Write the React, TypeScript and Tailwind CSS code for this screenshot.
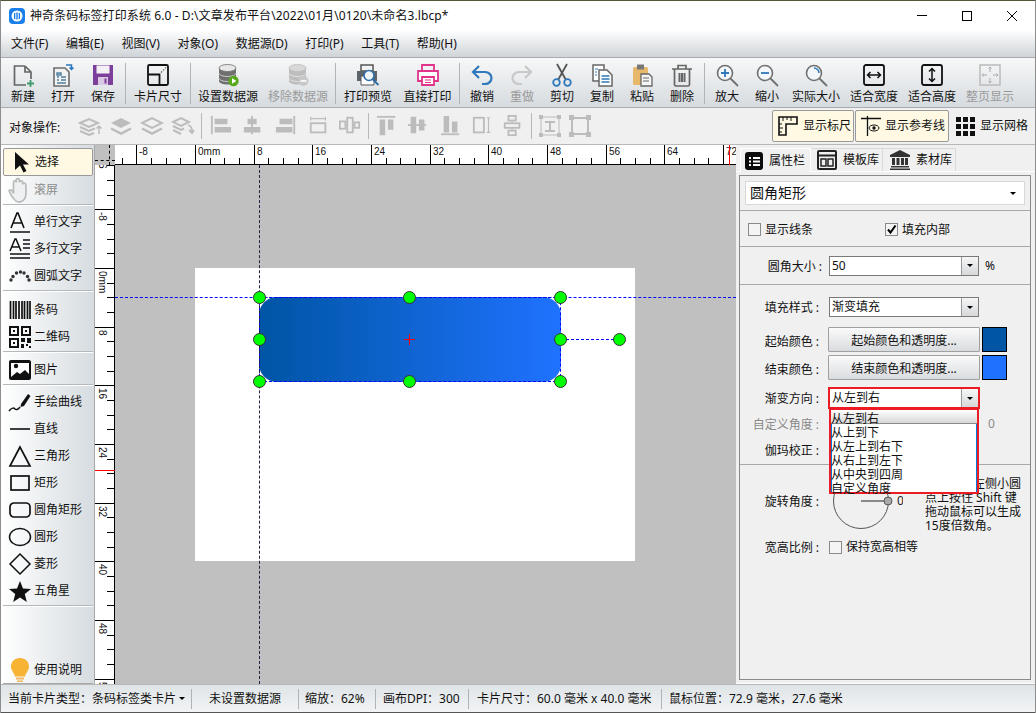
import type { ReactNode } from 'react';

const S = ({ children, size = 24, box = 24 }: { children: ReactNode; size?: number; box?: number }) => (
  <svg width={size} height={size} viewBox={`0 0 ${box} ${box}`} fill="none" className="shrink-0">
    {children}
  </svg>
);

const Lens = ({ children, c = '#707070' }: { children?: ReactNode; c?: string }) => (
  <S>
    <circle cx="10" cy="10" r="7.5" stroke={c} strokeWidth="1.6" fill="#f4f7f9" />
    <path d="M15.5 15.5 23 23" stroke={c} strokeWidth="1.8" />
    {children}
  </S>
);

const Db = ({ light }: { light?: boolean }) => {
  const top = light ? '#d8d8d8' : '#e8e8e8';
  const body = light ? '#bdbdbd' : '#6f6f6f';
  return (
    <S>
      <path d="M3 5v13c0 2 4 3.5 8.5 3.5S20 20 20 18V5z" fill={body} />
      <path d="M3 10c0 2 4 3.5 8.5 3.5S20 12 20 10M3 15c0 2 4 3.5 8.5 3.5S20 17 20 15" stroke={light ? '#e6e6e6' : '#d0d0d0'} strokeWidth="1" />
      <ellipse cx="11.5" cy="5" rx="8.5" ry="3.5" fill={top} stroke={body} strokeWidth=".8" />
      {light ? (
        <>
          <circle cx="17.5" cy="18" r="5" fill="#c8c8c8" />
          <path d="M14.5 18h6" stroke="#fff" strokeWidth="1.6" />
        </>
      ) : (
        <>
          <circle cx="17.5" cy="18" r="5.2" fill="#58a81c" />
          <path d="m16 15.3 4.4 2.7-4.4 2.7z" fill="#fff" />
        </>
      )}
    </S>
  );
};

const tools: { label: string; w: string; icon?: ReactNode; off?: boolean; sep?: boolean }[] = [
  { label: '新建', w: 'w-[40px]', icon: <S><path d="M14 3H3.5v19H15M14 3l6 6v7M14 3v6h6" stroke="#666" strokeWidth="1.7" /><path d="M19.5 17v7M16 20.5h7" stroke="#3f9a6d" strokeWidth="1.8" /></S> },
  { label: '打开', w: 'w-[40px]', icon: <S><path d="M3 5h11l4 4v14H3z" fill="#f2f2f2" stroke="#6c6c6c" strokeWidth="1.6" /><path d="M6 10h4v2H6zM6 14h2M6 17h2M10 14h5M10 17h5M6 20h9" stroke="#4f7f9f" strokeWidth="1.4" /><path d="M15 2h5.5v4M18.5 4.5l2 2 2-2" stroke="#2878c0" strokeWidth="1.5" /></S> },
  { label: '保存', w: 'w-[40px]', icon: <S><rect x="2" y="2" width="20" height="20" fill="#7c3f9a" /><rect x="5.5" y="2.5" width="13" height="8" fill="#f4f1f6" /><rect x="7" y="14" width="10" height="8" fill="#d9c8e2" /><rect x="13.5" y="15.5" width="2" height="5" fill="#7c3f9a" /></S> },
  { label: '', w: '', sep: true },
  { label: '卡片尺寸', w: 'w-[60px]', icon: <S><rect x="2" y="2" width="20" height="20" rx="1.5" stroke="#111" strokeWidth="1.8" /><path d="M2 11.5h11.5V22" stroke="#111" strokeWidth="1.8" /><path d="M15 9.500 20 4.500" stroke="#555" strokeWidth="1.200" strokeDasharray="1.500 1.500" /></S> },
  { label: '', w: '', sep: true },
  { label: '设置数据源', w: 'w-[70px]', icon: <Db /> },
  { label: '移除数据源', w: 'w-[70px]', off: true, icon: <Db light /> },
  { label: '', w: '', sep: true },
  { label: '打印预览', w: 'w-[60px]', icon: <S><path d="M5 2h12v6H5z" stroke="#555" strokeWidth="1.500" /><path d="M1 8h20v10H1z" fill="#5e6468" /><path d="M5 13h13v9H5z" fill="#fff" stroke="#555" /><circle cx="13" cy="12.500" r="5" fill="#eef4f8" stroke="#2f6fa8" strokeWidth="1.600" /><path d="m16.500 16 6 6" stroke="#2f6fa8" strokeWidth="2" /></S> },
  { label: '直接打印', w: 'w-[59px]', icon: <S><path d="M6 8V2h12v6" stroke="#e0338a" strokeWidth="1.800" /><path d="M6 18H2V8h20v10h-4" stroke="#e0338a" strokeWidth="1.800" fill="#fff" /><path d="M6 14h12v8H6z" fill="#fff" stroke="#e0338a" strokeWidth="1.800" /><path d="M9 17h6M9 19.500h6" stroke="#e0338a" strokeWidth="1.200" /></S> },
  { label: '', w: '', sep: true },
  { label: '撤销', w: 'w-[40px]', icon: <S><path d="M9 3 3 9l6 6" stroke="#2f78bb" strokeWidth="2.200" /><path d="M3 9h12c4 0 6.500 3 6.500 6s-2.500 6-6.500 6h-3" stroke="#2f78bb" strokeWidth="2.200" /></S> },
  { label: '重做', w: 'w-[40px]', off: true, icon: <S><path d="m15 3 6 6-6 6" stroke="#c8c8c8" strokeWidth="2.200" /><path d="M21 9H9c-4 0-6.500 3-6.500 6s2.500 6 6.500 6h3" stroke="#c8c8c8" strokeWidth="2.200" /></S> },
  { label: '剪切', w: 'w-[40px]', icon: <S><path d="M7 1l9 16M17 1 8 17" stroke="#555" strokeWidth="1.800" /><circle cx="6.500" cy="19.500" r="3.300" stroke="#2f78bb" strokeWidth="1.800" /><circle cx="17.500" cy="19.500" r="3.300" stroke="#2f78bb" strokeWidth="1.800" /></S> },
  { label: '复制', w: 'w-[40px]', icon: <S><path d="M3 2h11v16H3z" fill="#fff" stroke="#666" strokeWidth="1.500" /><path d="M9 7h8l5 5v11H9z" fill="#fff" stroke="#666" strokeWidth="1.500" /><path d="M11.500 13h8M11.500 16h8M11.500 19h8" stroke="#2f78bb" strokeWidth="1.300" /><path d="M5 6h3M5 9h2M5 12h2" stroke="#2f78bb" /></S> },
  { label: '粘贴', w: 'w-[40px]', icon: <S><rect x="3" y="4" width="15" height="18" rx="1.500" fill="#e8b86a" /><rect x="7" y="1.500" width="7" height="5" fill="#777" /><path d="M11 11h8l3 3v9H11z" fill="#f5f5f5" stroke="#666" strokeWidth="1.300" /><path d="M13 15h6M13 18h6" stroke="#666" /></S> },
  { label: '删除', w: 'w-[40px]', icon: <S><path d="M2 6h20M8 6V2.500h8V6" stroke="#666" strokeWidth="1.700" /><path d="M4.500 6v15.500c0 .8.700 1.500 1.500 1.500h12c.8 0 1.500-.7 1.500-1.500V6" stroke="#666" strokeWidth="1.700" /><path d="M8.500 10h2v9h-2zM11 10h2v9h-2zM13.500 10h2v9h-2z" fill="#666" /></S> },
  { label: '', w: '', sep: true },
  { label: '放大', w: 'w-[40px]', icon: <Lens><path d="M10 6v8M6 10h8" stroke="#2f78bb" strokeWidth="1.800" /></Lens> },
  { label: '缩小', w: 'w-[40px]', icon: <Lens><path d="M6 10h8" stroke="#2f78bb" strokeWidth="1.800" /></Lens> },
  { label: '实际大小', w: 'w-[58px]', icon: <Lens><path d="M10 5a5 5 0 0 1 5 5" stroke="#2f78bb" strokeWidth="1.500" /></Lens> },
  { label: '适合宽度', w: 'w-[58px]', icon: <S><rect x="2" y="2" width="20" height="20" rx="2" stroke="#111" strokeWidth="1.800" /><path d="M6 12h12M8.500 9 5.500 12l3 3M15.500 9l3 3-3 3" stroke="#111" strokeWidth="1.500" /></S> },
  { label: '适合高度', w: 'w-[58px]', icon: <S><rect x="2" y="2" width="20" height="20" rx="2" stroke="#111" strokeWidth="1.800" /><path d="M12 6v12M9 8.500l3-3 3 3M9 15.500l3 3 3-3" stroke="#111" strokeWidth="1.500" /></S> },
  { label: '整页显示', w: 'w-[58px]', off: true, icon: <S><rect x="2" y="2" width="20" height="20" stroke="#bbb" strokeWidth="1.500" /><path d="M12 4v5M10.500 5.500 12 4l1.500 1.500M12 20v-5M10.500 18.500 12 20l1.500-1.500M4 12h5M5.500 10.500 4 12l1.500 1.500M20 12h-5M18.500 10.500 20 12l-1.500 1.500" stroke="#aaa" /></S> },
];

const G = '#bcbcbc';
const objectOps: (ReactNode | null)[] = [
  <S><path d="m2 9 9-4 9 4-9 4zM2 13l9 4 6-2.600M2 17l9 4 5-2" stroke={G} strokeWidth="2" /><path d="M21 20v-8m-2.500 2.500L21 12l2.500 2.500" stroke={G} strokeWidth="1.500" /></S>,
  <S><path d="m2 9 10-5 10 5-10 5z" fill={G} /><path d="m2 14.500 10 5 10-5" stroke={G} strokeWidth="2.500" /></S>,
  <S><path d="m2 9 10-5 10 5-10 5z" stroke={G} strokeWidth="2" /><path d="m2 14.500 10 5 10-5" stroke={G} strokeWidth="2.500" /></S>,
  <S><path d="m2 8 8-4 8 4-8 4zM2 12l8 4 3-1.500M2 16l8 4" stroke={G} strokeWidth="2" /><path d="M17 11c3 1 4 3 4 6m-3-1 3 3 2-3" stroke={G} strokeWidth="1.800" /></S>,
  null,
  <S size={22}><path d="M2 1v20" stroke={G} strokeWidth="2" /><path d="M5 4h14v6H5zM5 13h18v6H5z" fill={G} /></S>,
  <S size={22}><path d="M11 1v20" stroke={G} strokeWidth="2" /><path d="M6 4h10v6H6zM2 13h18v6H2z" fill={G} /></S>,
  <S size={22}><path d="M21 1v20" stroke={G} strokeWidth="2" /><path d="M5 4h14v6H5zM1 13h18v6H1z" fill={G} /></S>,
  <S size={22}><path d="M3 4h16M3 2v4M19 2v4" stroke={G} strokeWidth="1.300" /><rect x="3" y="9" width="16" height="10" stroke={G} strokeWidth="2" /></S>,
  <S size={22}><rect x="1" y="7" width="6" height="8" stroke={G} strokeWidth="2" /><rect x="9" y="3" width="6" height="16" stroke={G} strokeWidth="2" /><rect x="17" y="8" width="5" height="6" stroke={G} strokeWidth="2" /><path d="M7 11h2M15 11h2" stroke={G} /></S>,
  null,
  <S size={22}><path d="M1 2h20" stroke={G} strokeWidth="2" /><path d="M4 5h6v17H4zM13 5h6v11h-6z" fill={G} /></S>,
  <S size={22}><path d="M1 11h20" stroke={G} strokeWidth="2" /><path d="M4 2h6v18H4zM13 5h6v12h-6z" fill={G} /></S>,
  <S size={22}><path d="M1 21h20" stroke={G} strokeWidth="2" /><path d="M4 1h6v18H4zM13 7h6v12h-6z" fill={G} /></S>,
  <S size={22}><rect x="2" y="3" width="11" height="16" stroke={G} strokeWidth="2" /><path d="M18 3v16M16 3h4M16 19h4" stroke={G} strokeWidth="1.300" /></S>,
  <S size={22}><rect x="7" y="1" width="8" height="5" stroke={G} strokeWidth="2" /><rect x="3" y="9" width="16" height="5" stroke={G} strokeWidth="2" /><rect x="7" y="17" width="8" height="5" stroke={G} strokeWidth="2" /><path d="M11 6v3M11 14v3" stroke={G} /></S>,
  null,
  <S size={24}><path d="M3 3h18v18H3z" stroke={G} strokeWidth="1" /><path d="M1 1h4v4H1zM19 1h4v4h-4zM1 19h4v4H1zM19 19h4v4h-4z" fill={G} /><path d="M7 8h10M12 8v9M7 17h10" stroke={G} strokeWidth="2" /></S>,
  <S size={24}><path d="M1 1h5v5H1zM18 1h5v5h-5zM1 18h5v5H1zM18 18h5v5h-5z" fill={G} /><path d="M6 4h12M4 6v12M20 6v12M6 20h12" stroke={G} strokeWidth="2" /></S>,
];

const opWidths = ['w-[31px]', 'w-[31px]', 'w-[31px]', 'w-[31px]', '', 'w-[32px]', 'w-[32px]', 'w-[34px]', 'w-[32px]', 'w-[30px]', '', 'w-[30px]', 'w-[32px]', 'w-[34px]', 'w-[30px]', 'w-[30px]', '', 'w-[30px]', 'w-[30px]'];

type Side = { label: string; icon: ReactNode; off?: boolean; active?: boolean; h?: string };
const K = '#111';
const sideGroups: { items: Side[]; gap: string }[] = [
  {
    gap: 'mb-[2px]',
    items: [
      { label: '选择', active: true, h: 'h-[28px]', icon: <S><path d="M6 2v18l5-4.500 3.500 7 3-1.500-3.500-6.500H20z" fill={K} /></S> },
      { label: '滚屏', off: true, icon: <S size={26}><path d="M7 21c-2-2-4-5-5-8 0-1.500 2-1.500 3 0l1 2V5c0-2 2.500-2 2.500 0V3c0-2 3-2 3 0v2c0-2 3-2 3 0v2c0-2 3-1.500 3 .5V15c0 4-2 7-5 8H10c-1 0-2-1-3-2z" stroke="#bbb" strokeWidth="1.600" fill="#eef0f1" /></S> },
    ],
  },
  {
    gap: 'mb-[4px]',
    items: [
      { label: '单行文字', icon: <S><path d="M2 22h20" stroke={K} strokeWidth="1.500" /><path d="m3 18 6-15h1l6 15M5 13h9" stroke={K} strokeWidth="1.600" /></S> },
      { label: '多行文字', icon: <S><path d="m2 14 5-12h1l5 12M3.500 10h8" stroke={K} strokeWidth="1.500" /><path d="M15 3h7M15 7h7M15 11h7M2 17h20M2 21h20" stroke={K} strokeWidth="1.500" /></S> },
      { label: '圆弧文字', icon: <S>{[[3, 16], [5, 12.500], [8.500, 9], [12.500, 8], [16, 9], [19.500, 12.500], [21, 16]].map(([x, y]) => <circle key={x} cx={x} cy={y} r="1.700" fill="#333" />)}</S> },
    ],
  },
  {
    gap: 'mb-[3px]',
    items: [
      { label: '条码', icon: <S><path d="M2.500 3v18M5.500 3v18M8 3v18M11 3v18M14 3v18M16.500 3v18M19.500 3v18M22 3v18" stroke={K} strokeWidth="1.700" /></S> },
      { label: '二维码', icon: <S><path fillRule="evenodd" d="M1 1h10v10H1zm2 2v6h6V3zM13 1h10v10H13zm2 2v6h6V3zM1 13h10v10H1zm2 2v6h6v-6z" fill={K} /><path d="M5 5h2v2H5zM17 5h2v2h-2zM5 17h2v2H5zM13 13h4v4h-4zM19 13h4v5h-4zM13 19h3v4h-3zM18 19h2v2h-2zM21 21h2v2h-2z" fill={K} /></S> },
    ],
  },
  {
    gap: 'mb-[2px]',
    items: [
      { label: '图片', icon: <S><rect x="1" y="2" width="22" height="20" rx="2" fill={K} /><path d="M3 5h18v11l-4-4-5 4-3-2-6 5z" fill="#fff" /><circle cx="8" cy="8" r="2.200" fill={K} /></S> },
    ],
  },
  {
    gap: 'mb-[0px]',
    items: [
      { label: '手绘曲线', icon: <S><path d="m13 14 7-10 2.500 2L16 16l-3.500 1z" fill={K} /><path d="M1 21c3-4 5-3 6-2s3 1 5-2" stroke={K} strokeWidth="1.500" /></S> },
      { label: '直线', icon: <S><path d="M2 12h20" stroke={K} strokeWidth="1.600" /></S> },
      { label: '三角形', icon: <S><path d="M12 3 2 22h20z" stroke={K} strokeWidth="1.700" /></S> },
      { label: '矩形', icon: <S><rect x="3" y="5" width="18" height="14" stroke={K} strokeWidth="1.700" /></S> },
      { label: '圆角矩形', icon: <S><rect x="2" y="5" width="20" height="14" rx="4" stroke={K} strokeWidth="1.700" /></S> },
      { label: '圆形', icon: <S><ellipse cx="12" cy="12" rx="10.500" ry="8.500" stroke={K} strokeWidth="1.500" /></S> },
      { label: '菱形', icon: <S><path d="m12 2 10 10-10 10L2 12z" stroke={K} strokeWidth="1.500" /></S> },
      { label: '五角星', icon: <S><path d="m12 2 3 7.500 8 .5-6.200 5 2 8L12 18.500 5.200 23l2-8L1 10l8-.5z" fill={K} /></S> },
    ],
  },
];

const TOP_LABELS = [-8, 0, 8, 16, 24, 32, 40, 48, 56, 64, 72];

const TopRuler = () => {
  const ticks = Array.from({ length: 44 }, (_, i) => i * 2 - 10);
  return (
    <svg width="621" height="20" className="block">
      <rect width="621" height="20" fill="#fff" />
      {ticks.map((mm) => {
        const x = Math.round(80 + mm * 7.333);
        return <path key={mm} d={`M${x + 0.5} ${mm % 8 === 0 ? 0 : 13}V20`} stroke="#000" />;
      })}
      {TOP_LABELS.map((mm) => (
        <text key={mm} x={Math.round(80 + mm * 7.333) + 3} y="10" fontSize="10" fill="#111" fontFamily="Liberation Sans">
          {mm === 0 ? '0mm' : mm}
        </text>
      ))}
      <path d="M0 19.500H621" stroke="#000" />
      <path d="M614.500 0V20" stroke="#f00" />
    </svg>
  );
};

const LeftRuler = () => {
  const ticks = Array.from({ length: 40 }, (_, i) => i * 2 - 20);
  return (
    <svg width="20" height="519" className="block shrink-0">
      <rect width="20" height="519" fill="#fff" />
      {ticks.map((mm) => {
        const y = Math.round(103 + mm * 7.333);
        return <path key={mm} d={`M${mm % 8 === 0 ? 0 : 12} ${y + 0.5}H20`} stroke="#000" />;
      })}
      {[-16, -8, 0, 8, 16, 24, 32, 40, 48, 56].map((mm) => (
        <text key={mm} transform={`translate(4 ${Math.round(103 + mm * 7.333) + 3}) rotate(90)`} fontSize="10" fill="#111" fontFamily="Liberation Sans">
          {mm === 0 ? '0mm' : mm}
        </text>
      ))}
      <path d="M19.500 0V519" stroke="#000" />
      <path d="M0 305.500H20" stroke="#f00" />
    </svg>
  );
};

const Handle = ({ className }: { className: string }) => (
  <div className={`absolute w-[13px] h-[13px] rounded-full bg-[#00ff00] border border-[#333] ${className}`} />
);

const Caret = () => <span className="block w-0 h-0 border-x-[3px] border-x-transparent border-t-[3px] border-t-black" />;

const Select = ({ value, className = 'border-[#7a7a7a]', w = 'w-[150px]' }: { value: string; className?: string; w?: string }) => (
  <div className={`flex ${w} h-[20px] bg-white border items-center ${className}`}>
    <span className="flex-1 pl-[2px] leading-[20px]">{value}</span>
    <span className="flex items-center justify-center w-[17px] h-full border-l border-[#9a9a9a] bg-linear-to-b from-[#f6f6f6] to-[#d6d8da]">
      <Caret />
    </span>
  </div>
);

const Label = ({ children, off, className = 'w-[79px] mr-[10px] pt-[2px]' }: { children: ReactNode; off?: boolean; className?: string }) => (
  <span className={`text-right shrink-0 ${className} ${off ? 'text-[#8a8a8a]' : ''}`}>
    {children}
    <span className="ml-[3px]">:</span>
  </span>
);

const ColorRow = ({ name, color, className = '' }: { name: string; color: string; className?: string }) => (
  <div className={`flex items-center h-[25px] ${className}`}>
    <Label className="w-[79px] mr-[10px] pt-[4px]">{name}</Label>
    <button className="w-[152px] h-[25px] -ml-[1px] pt-[2px] border border-[#a0a0a0] rounded-[1px] bg-linear-to-b from-[#fafafa] to-[#d9dcdf] text-[12px]">
      {name}和透明度...
    </button>
    <span className="w-[25px] h-[25px] ml-[2px] border border-black" style={{ background: color }} />
  </div>
);

const Box = ({ children }: { children?: ReactNode }) => (
  <span className="flex w-[13px] h-[13px] border border-[#8a8a8a] bg-[#f4f4f4] items-center justify-center shrink-0">{children}</span>
);

export default function App() {
  return (
    <div className="w-[1036px] h-[713px] overflow-hidden flex flex-col bg-[#f0f0f0] text-[12px] leading-[16px] text-[#111] font-['Noto_Sans','Noto_Sans_CJK_SC',sans-serif] border-x border-[#8e8e8e] border-t border-t-[#55553a]">
      {/* title */}
      <div className="h-[29px] shrink-0 bg-white flex items-center">
        <svg width="16" height="16" viewBox="0 0 16 16" className="ml-[8px] shrink-0">
          <rect width="16" height="16" rx="4" fill="#1a7fe8" />
          <circle cx="8" cy="8" r="5.500" fill="#fff" />
          <path d="M5.500 5v6M7.200 4.500v7M8.800 4.500v7M10.500 5v6" stroke="#1a7fe8" strokeWidth="1" />
        </svg>
        <span className="ml-[5px] flex-1 tracking-[0.1px]">神奇条码标签打印系统 6.0 - D:\文章发布平台\2022\01月\0120\未命名3.lbcp*</span>
        <div className="flex items-center pr-[1px]">
          <span className="w-[45px] flex justify-center"><span className="w-[10px] h-[1px] bg-black" /></span>
          <span className="w-[45px] flex justify-center"><span className="w-[10px] h-[10px] border border-black" /></span>
          <span className="w-[45px] flex justify-center">
            <svg width="10" height="10"><path d="m0 0 10 10M10 0 0 10" stroke="#000" /></svg>
          </span>
        </div>
      </div>
      {/* menu */}
      <div className="h-[28px] shrink-0 flex items-center pl-[10px] gap-[17.6px] bg-linear-to-b from-white to-[#cfd4d8] border-b border-[#a8acb0]">
        {['文件(F)', '编辑(E)', '视图(V)', '对象(O)', '数据源(D)', '打印(P)', '工具(T)', '帮助(H)'].map((m) => (
          <span key={m}>{m}</span>
        ))}
      </div>
      {/* main toolbar */}
      <div className="h-[50px] shrink-0 flex pl-[2px] bg-linear-to-b from-[#f7f8f8] to-[#d6dbdf] border-b border-[#a8acb0]">
        {tools.map((t, i) =>
          t.sep ? (
            <span key={i} className="w-[1px] h-[41px] mt-[5px] mx-[2px] bg-[#b0b4b8]" />
          ) : (
            <div key={t.label} className={`${t.w} flex flex-col items-center pt-[5px] ${t.off ? 'text-[#9a9a9a]' : ''}`}>
              {t.icon}
              <span className="mt-[2px] whitespace-nowrap">{t.label}</span>
            </div>
          ),
        )}
      </div>
      {/* object toolbar */}
      <div className="h-[36px] shrink-0 flex items-center pl-[8px] pr-[5px]">
        <span className="w-[65px] shrink-0 mt-[3px]">对象操作:</span>
        {objectOps.map((o, i) =>
          o === null ? (
            <span key={i} className="w-[1px] h-[26px] bg-[#b8b8b8] mx-[3px]" />
          ) : (
            <span key={i} className={`${opWidths[i]} flex justify-center`}>{o}</span>
          ),
        )}
        <div className="ml-auto flex items-center">
          <div className="flex items-center gap-[5px] w-[82px] h-[32px] pl-[5px] bg-[#fff9e3] border border-[#9a9a9a] rounded-[2px]">
            <svg width="20" height="20" viewBox="0 0 20 20" fill="none"><path d="M1 19V1h18v7H8v11z" stroke="#111" strokeWidth="1.600" /><path d="M5 1v4M9 1v3M13 1v4M1 8h3M1 12h4M1 16h3" stroke="#111" /></svg>
            <span className="whitespace-nowrap">显示标尺</span>
          </div>
          <div className="flex items-center gap-[4px] w-[94px] h-[32px] ml-[1px] pl-[5px] bg-[#fff9e3] border border-[#9a9a9a] rounded-[2px]">
            <svg width="20" height="20" viewBox="0 0 20 20" fill="none"><path d="M0 2.500h20M6.500 0v20" stroke="#111" strokeWidth="1.300" /><ellipse cx="13" cy="12" rx="5" ry="3" stroke="#111" /><circle cx="13" cy="12" r="1.700" fill="#111" /></svg>
            <span className="whitespace-nowrap">显示参考线</span>
          </div>
          <div className="flex items-center gap-[5px] ml-[7px] w-[74px]">
            <svg width="19" height="19" viewBox="0 0 19 19" fill="#111">{[0, 7, 14].flatMap((x) => [0, 7, 14].map((y) => <rect key={`${x}-${y}`} x={x} y={y} width="5" height="5" />))}</svg>
            <span className="whitespace-nowrap">显示网格</span>
          </div>
        </div>
      </div>

      <div className="flex flex-1 min-h-0 border-t border-[#b8b8b8]">
        {/* left tools */}
        <div className="w-[94px] shrink-0 flex flex-col pl-[2px] pt-[3px] pr-[1px] border-r border-[#a8a8a8] bg-linear-to-r from-white to-[#d6dce0]">
          {sideGroups.map((g, gi) => (
            <div key={gi}>
              {g.items.map((it) => (
                <div
                  key={it.label}
                  className={`flex items-center gap-[2px] pl-[5px] whitespace-nowrap ${it.h ?? 'h-[27px]'} ${it.active ? 'bg-[#fff9e3] border border-[#9a9a9a] rounded-[2px]' : ''} ${it.off ? 'text-[#8c8c8c]' : ''}`}
                >
                  <span className="w-[24px] flex justify-center shrink-0">{it.icon}</span>
                  <span>{it.label}</span>
                </div>
              ))}
              <div className={`h-[2px] mt-[1px] ${g.gap} bg-[#b4b8bb] border-b border-white`} />
            </div>
          ))}
          <div className="mt-auto h-[27px] flex items-center gap-[2px] pl-[5px] whitespace-nowrap">
            <span className="w-[24px] flex justify-center">
              <svg width="20" height="26" viewBox="0 0 20 26"><path d="M10 1C4.500 1 1 5 1 9.500c0 4 3 6 4 10h10c1-4 4-6 4-10C19 5 15.500 1 10 1z" fill="#f7b334" /><path d="M6 20.500h8v2H6zM7 23.500h6V25H7z" fill="#f0b860" /></svg>
            </span>
            <span>使用说明</span>
          </div>
          <div className="h-[1px] bg-[#a8a8a8]" />
        </div>

        {/* rulers + canvas */}
        <div className="w-[641px] shrink-0 flex flex-col">
          <div className="flex h-[20px] shrink-0">
            <div className="relative w-[20px] h-[20px] bg-[#c0c0c0] shrink-0">
              <span className="absolute left-[14px] top-0 h-[20px] border-l border-dashed border-black" />
              <span className="absolute left-0 top-[15px] w-[20px] border-t border-dashed border-black" />
            </div>
            <TopRuler />
          </div>
          <div className="flex flex-1 min-h-0">
            <LeftRuler />
            <div className="relative flex-1 bg-[#c0c0c0] overflow-hidden">
              <div className="absolute left-[80px] top-[103px] w-[440px] h-[293px] bg-white" />
              <div className="absolute left-[144px] top-[132px] w-[302px] h-[85px] rounded-[18px] bg-linear-to-r from-[#0055a5] to-[#1f72ff]" />
              <div className="absolute left-[144px] top-[132px] w-[302px] h-[85px] border-[1px] border-dashed border-[#0000ff]" />
              <div className="absolute left-0 right-0 top-[132px] border-t border-dashed border-[#0000ff]" />
              <div className="absolute top-0 bottom-0 left-[144px] border-l border-dashed border-[#22224a]" />
              <div className="absolute left-[446px] top-[174px] w-[58px] border-t border-dashed border-[#0000ff]" />
              <span className="absolute left-[289px] top-[174px] w-[11px] h-[1px] bg-[#ff0000]" />
              <span className="absolute left-[294px] top-[169px] w-[1px] h-[11px] bg-[#ff0000]" />
              <Handle className="left-[138px] top-[126px]" />
              <Handle className="left-[288px] top-[126px]" />
              <Handle className="left-[439px] top-[126px]" />
              <Handle className="left-[138px] top-[168px]" />
              <Handle className="left-[439px] top-[168px]" />
              <Handle className="left-[498px] top-[168px]" />
              <Handle className="left-[138px] top-[210px]" />
              <Handle className="left-[288px] top-[210px]" />
              <Handle className="left-[439px] top-[210px]" />
            </div>
          </div>
        </div>

        {/* right panel */}
        <div className="flex-1 flex flex-col min-w-0">
          <div className="h-[26px] flex items-end pl-[4px] shrink-0">
            <div className="flex items-center gap-[6px] w-[71px] h-[24px] pl-[4px] bg-[#f0f0f0] border-t border-x border-white -mb-[1px] z-10">
              <svg width="18" height="18" viewBox="0 0 18 18"><rect width="18" height="18" rx="3" fill="#0c0c0c" /><path d="M4 5h2v2H4zM4 8.500h2v2H4zM4 12h2v2H4zM8 5h7v2H8zM8 8.500h7v2H8zM8 12h7v2H8z" fill="#fff" /></svg>
              <span>属性栏</span>
            </div>
            <div className="flex items-center gap-[6px] w-[72px] h-[23px] pl-[6px] border-t border-r border-[#d8d8d8]">
              <svg width="20" height="20" viewBox="0 0 20 20" fill="none"><rect x="1" y="1" width="18" height="18" rx="1" stroke="#222" strokeWidth="2" /><path d="M1 5.500h18" stroke="#222" strokeWidth="2" /><rect x="4" y="9" width="5" height="7" stroke="#222" strokeWidth="1.500" /><rect x="11" y="9" width="5" height="7" stroke="#222" strokeWidth="1.500" /></svg>
              <span>模板库</span>
            </div>
            <div className="flex items-center gap-[6px] w-[73px] h-[23px] pl-[7px] border-t border-r border-[#d8d8d8]">
              <svg width="20" height="20" viewBox="0 0 20 20" fill="#333"><path d="M10 0 0 5v2h20V5zM2 8h3v7H2zM6.500 8h3v7h-3zM11 8h3v7h-3zM15 8h3v7h-3zM1 16h18v1.500H1zM0 18.500h20V20H0z" /></svg>
              <span>素材库</span>
            </div>
          </div>
          <div className="h-[4px] border-t border-white shrink-0" />
          <div className="ml-[3px] w-[292px] h-[505px] shrink-0 border border-[#8a8a8a] flex flex-col">
            <div className="h-[35px] shrink-0 border-b border-[#a8a8a8] flex items-center px-[5px]">
              <div className="flex-1 h-[24px] bg-white border border-[#d8d8d8] flex items-center justify-between pl-[4px] pr-[8px] text-[14px]">
                圆角矩形 <Caret />
              </div>
            </div>
            <div className="h-[36px] shrink-0 pt-[2px] border-b border-[#a8a8a8] flex items-center">
              <span className="ml-[8px] flex items-center gap-[4px] w-[137px]"><Box />显示线条</span>
              <span className="flex items-center gap-[4px]">
                <Box>
                  <svg width="11" height="11" viewBox="0 0 11 11" fill="none"><path d="m2 5.500 2.500 3L9.500 1.500" stroke="#000" strokeWidth="2" /></svg>
                </Box>
                填充内部
              </span>
            </div>
            <div className="h-[38px] shrink-0 border-b border-[#a8a8a8] flex items-center">
              <Label className="w-[82px] mr-[7px] pt-[2px]">圆角大小</Label>
              <Select value="50" />
              <span className="ml-[6px]">%</span>
            </div>
            <div className="h-[180px] shrink-0 border-b border-[#a8a8a8] pt-[12px]">
              <div className="flex items-center">
                <Label>填充样式</Label>
                <Select value="渐变填充" />
              </div>
              <ColorRow name="起始颜色" color="#0055a5" className="mt-[10px]" />
              <ColorRow name="结束颜色" color="#1f72ff" className="mt-[3px]" />
              <div className="relative flex items-center mt-[8px]">
                <Label>渐变方向</Label>
                <Select value="从左到右" className="border-transparent outline-2 -outline-offset-1 outline-[#ed1c24]" />
                <div className="absolute z-20 left-[89px] top-[20px] w-[150px] h-[86px] border-2 border-[#ed1c24] bg-white leading-[18px] shadow-[inset_1px_0_0_#0078d7,inset_-1px_0_0_#0078d7]">
                  <div className="h-[14px] bg-linear-to-b from-white to-[#d8d8d8] border-b border-[#8a8a8a]">从左到右</div>
                  {['从上到下', '从左上到右下', '从右上到左下', '从中央到四周', '自定义角度'].map((d) => (
                    <div key={d} className="h-[14px]">{d}</div>
                  ))}
                </div>
              </div>
              <div className="flex items-center h-[20px] mt-[6px]">
                <Label off>自定义角度</Label>
                <span className="w-[150px]" />
                <span className="ml-[9px] text-[#8a8a8a]">0</span>
              </div>
              <div className="flex items-center h-[20px] mt-[6px]">
                <Label>伽玛校正</Label>
              </div>
            </div>
            <div className="flex items-center mt-[7px] h-[58px]">
              <Label>旋转角度</Label>
              <svg width="70" height="58" viewBox="0 0 70 58" fill="none" className="ml-[4px] shrink-0">
                <circle cx="28" cy="29" r="27.500" stroke="#555" />
                <path d="M28 29h26" stroke="#222" />
                <circle cx="55" cy="29" r="4" fill="#aaa" stroke="#555" />
                <text x="64" y="33" fontSize="12" fill="#222" fontFamily="Noto Sans">0</text>
              </svg>
              <div className="ml-[22px] w-[100px] self-start mt-[5px] leading-[14px] text-[12px] whitespace-nowrap">
                旋转时在左侧小圆
                <br />
                点上按住 Shift 键
                <br />
                拖动鼠标可以生成
                <br />
                15度倍数角。
              </div>
            </div>
            <div className="flex items-center h-[20px] mt-[7px]">
              <Label>宽高比例</Label>
              <Box />
              <span className="ml-[4px]">保持宽高相等</span>
            </div>
          </div>
          <div className="mt-[3px] h-[1px] bg-white" />
        </div>
      </div>

      {/* status */}
      <div className="h-[29px] shrink-0 flex items-center pl-[7px] bg-linear-to-b from-[#dfe4e7] to-[#f2f4f5] border-t border-[#b8b8b8] border-b border-b-[#555] whitespace-nowrap">
        <span className="w-[183px] flex items-center gap-[3px]">当前卡片类型：条码标签类卡片 <Caret /></span>
        <span className="w-[1px] h-[20px] bg-[#b0b4b8]" />
        <span className="w-[106px] pl-[17px]">未设置数据源</span>
        <span className="w-[1px] h-[20px] bg-[#b0b4b8]" />
        <span className="w-[76px] pl-[6px]">缩放：62%</span>
        <span className="w-[1px] h-[20px] bg-[#b0b4b8]" />
        <span className="w-[92px] pl-[7px]">画布DPI：300</span>
        <span className="w-[1px] h-[20px] bg-[#b0b4b8]" />
        <span className="w-[192px] pl-[8px]">卡片尺寸：60.0 毫米 x 40.0 毫米</span>
        <span className="w-[1px] h-[20px] bg-[#b0b4b8]" />
        <span className="pl-[7px]">鼠标位置：72.9 毫米，27.6 毫米</span>
      </div>
    </div>
  );
}
